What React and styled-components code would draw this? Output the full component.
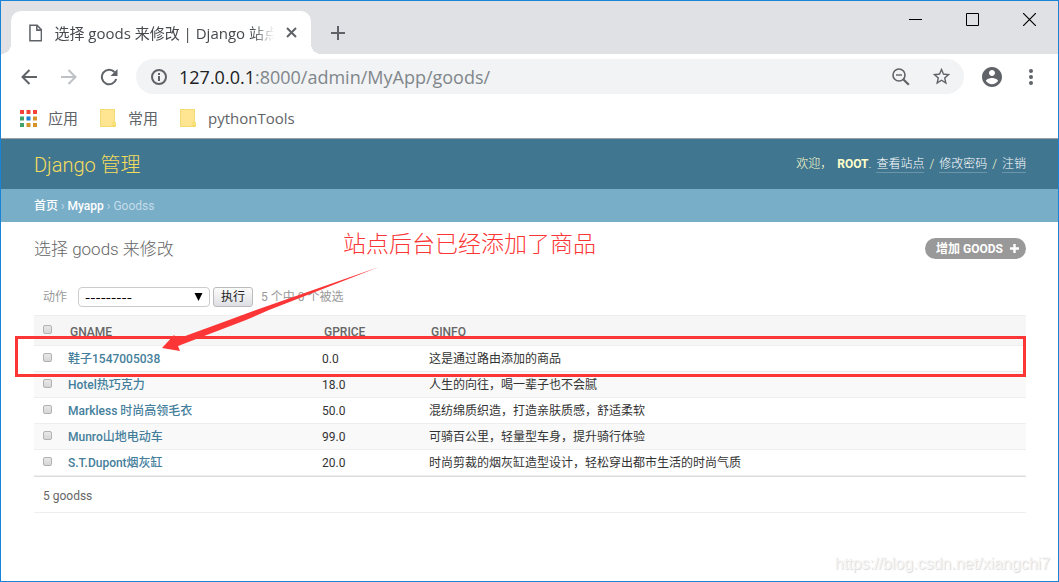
import React from "react";
import styled, { createGlobalStyle } from "styled-components";

const GlobalStyle = createGlobalStyle`
  * {
    box-sizing: border-box;
  }
  body {
    margin: 0;
    background: #fff;
  }
  button {
    font-family: inherit;
    cursor: pointer;
  }
`;

const BrowserWindow = styled.div`
  position: relative;
  min-height: 100vh;
  border: 1px solid #1883d7;
  background: #fff;
  font-family: "Open Sans", "Noto Sans CJK SC", sans-serif;
`;

const IconButton = styled.button`
  display: flex;
  align-items: center;
  justify-content: center;
  flex: none;
  width: ${(props) => props.$width || 24}px;
  height: ${(props) => props.$height || 24}px;
  padding: 0;
  border: 0;
  background: none;
  color: ${(props) => props.$color || "#5f6368"};
`;

const TabStrip = styled.div`
  display: flex;
  align-items: flex-end;
  height: 53px;
  padding-left: 10px;
  background: #dfe1e5;
`;

const Tab = styled.div`
  position: relative;
  display: flex;
  align-items: center;
  width: 300px;
  height: 43px;
  padding: 0 8px 0 18px;
  border-radius: 10px 10px 0 0;
  background: #fff;
  color: #45494d;

  &::before,
  &::after {
    content: "";
    position: absolute;
    bottom: 0;
    width: 10px;
    height: 10px;
  }
  &::before {
    right: 100%;
    background: radial-gradient(circle at 0 0, transparent 10px, #fff 10px);
  }
  &::after {
    left: 100%;
    background: radial-gradient(circle at 100% 0, transparent 10px, #fff 10px);
  }
`;

const TabTitle = styled.span`
  flex: 1;
  margin-left: 12px;
  white-space: nowrap;
  font-size: 15px;
  line-height: 24px;
  mask-image: linear-gradient(to right, #000 88%, transparent 98%);
`;

const NewTab = styled.div`
  align-self: center;
  margin: 10px auto 0 15px;
`;

const WindowControls = styled.div`
  display: flex;
  align-self: flex-start;
  height: 38px;
`;

const Toolbar = styled.div`
  display: flex;
  align-items: center;
  height: 45px;
  padding: 0 15px 0 16px;
`;

const NavButtons = styled.div`
  display: flex;
  gap: 16px;
  margin-right: 15px;
`;

const AddressBar = styled.div`
  display: flex;
  flex: 1;
  align-items: center;
  height: 35px;
  padding: 0 11px;
  border-radius: 18px;
  background: #f1f3f4;
`;

const Address = styled.div`
  flex: 1;
  margin-left: 8px;
  color: #80868b;
  font-size: 18px;
  line-height: 28px;

  b {
    color: #202124;
    font-weight: 400;
  }
`;

const AddressActions = styled.div`
  display: flex;
  gap: 16px;
`;

const MenuButtons = styled.div`
  display: flex;
  gap: 15px;
  margin-left: 16px;
`;

const BookmarksBar = styled.nav`
  display: flex;
  align-items: center;
  gap: 22px;
  height: 40px;
  padding: 0 18px 2px;
  border-bottom: 1px solid #9aa0a3;
`;

const Bookmark = styled.a`
  display: flex;
  align-items: center;
  gap: 11px;
  color: #5f6368;
  font-size: 15px;
  line-height: 24px;
  text-decoration: none;
`;

const Admin = styled.div`
  font-family: Roboto, "Noto Sans CJK SC", sans-serif;
  font-size: 12px;
  line-height: 16px;
  color: #333;
`;

const Header = styled.header`
  display: flex;
  align-items: center;
  justify-content: space-between;
  height: 50px;
  padding: 0 32px 0 33px;
  background: #417690;
  color: #ffc;
`;

const SiteName = styled.h1`
  margin: 0;
  padding-top: 1px;
  color: #f5dd5d;
  font-size: 20px;
  font-weight: 300;
  line-height: 24px;
`;

const UserTools = styled.div`
  display: flex;
  gap: 5px;
  font-weight: 300;

  strong {
    font-weight: 700;
  }
  a {
    border-bottom: 1px solid #6b95a9;
    color: #fff;
    text-decoration: none;
  }
`;

const Breadcrumbs = styled.nav`
  padding: 9px 33px 8px;
  background: #79aec8;
  color: #c4dce8;

  a {
    color: #fff;
    font-weight: 500;
    text-decoration: none;
  }
`;

const Content = styled.main`
  padding: 16px 32px 20px 33px;
`;

const TitleRow = styled.div`
  display: flex;
  align-items: flex-start;
  justify-content: space-between;
  height: 49px;
`;

const PageTitle = styled.h2`
  margin: 0;
  color: #666;
  font-size: 17px;
  font-weight: 300;
  line-height: 22px;
`;

const AddLink = styled.a`
  display: flex;
  align-items: center;
  gap: 7px;
  height: 21px;
  padding: 0 7px 0 11px;
  border-radius: 11px;
  background: #999;
  color: #fff;
  font-weight: 700;
  text-decoration: none;
`;

const Actions = styled.form`
  display: flex;
  align-items: center;
  gap: 3px;
  height: 28px;
  padding: 0 9px 8px;
  color: #999;
`;

const ActionLabel = styled.label`
  display: flex;
  align-items: center;
  gap: 11px;
`;

const SelectBox = styled.span`
  position: relative;
  display: flex;

  svg {
    position: absolute;
    top: 6px;
    right: 7px;
    pointer-events: none;
  }
`;

const ActionSelect = styled.select`
  appearance: none;
  width: 132px;
  height: 20px;
  padding: 0 6px;
  border: 1px solid #ccc;
  border-radius: 4px;
  background: #fff;
  color: #000;
  font-family: "Noto Sans CJK SC", sans-serif;
  font-size: 15px;
  line-height: 18px;
`;

const RunButton = styled.button`
  height: 20px;
  padding: 0 7px;
  border: 1px solid #bbb;
  border-radius: 3px;
  background: linear-gradient(#fcfcfc, #dedfe4);
  color: #222;
  font-size: 12px;
  line-height: 18px;
`;

const Counter = styled.span`
  margin-left: 5px;
`;

const ResultTable = styled.table`
  width: 100%;
  border-collapse: collapse;
  table-layout: fixed;

  th,
  td {
    height: 26px;
    padding: 0 8px;
    border-bottom: 1px solid #eee;
    text-align: left;
    white-space: nowrap;
  }
  thead th {
    height: 30px;
    padding: 3px 10px 0;
    border-top: 1px solid #eee;
    background: #f6f6f6;
    color: #666;
    font-weight: 500;
  }
  th:first-child,
  td:first-child {
    padding: 0 9px;
  }
  tbody tr:nth-child(even) {
    background: #f9f9f9;
  }
  tbody a {
    color: #447e9b;
    font-weight: 500;
    text-decoration: none;
  }
`;

const HeadCell = styled.th`
  width: ${(props) => (props.$width ? `${props.$width}px` : "auto")};
`;

const RowCheck = styled.input`
  display: block;
  appearance: none;
  width: 9px;
  height: 9px;
  margin: 0 0 2px;
  border: 1px solid #b2b2b2;
  border-radius: 2px;
  background: linear-gradient(#e8e8e8, #d6d6d6);
`;

const Paginator = styled.p`
  margin: 0;
  padding: 11px 9px 8px;
  border-top: 1px solid #ddd;
  border-bottom: 1px solid #eee;
  color: #666;
`;

const Highlight = styled.div`
  position: absolute;
  top: 335px;
  left: 14px;
  right: 32px;
  height: 41px;
  border: 3px solid #fc3636;
  pointer-events: none;
`;

const Note = styled.div`
  position: absolute;
  top: 225px;
  left: 342px;
  color: #fc3636;
  font-family: "Noto Sans CJK SC", sans-serif;
  font-size: 23px;
  font-weight: 300;
  line-height: 32px;
  pointer-events: none;
`;

const NoteArrow = styled.svg`
  position: absolute;
  top: 265px;
  left: 160px;
  pointer-events: none;
`;

const Watermark = styled.div`
  position: absolute;
  right: 8px;
  bottom: 7px;
  color: #f6f6f6;
  font-family: "Liberation Sans", sans-serif;
  font-size: 16px;
  line-height: 20px;
  text-shadow: 1px 1px 1px #d8d8d8;
`;

const goods = [
  { name: "鞋子1547005038", price: "0.0", info: "这是通过路由添加的商品" },
  { name: "Hotel热巧克力", price: "18.0", info: "人生的向往，喝一辈子也不会腻" },
  {
    name: "Markless 时尚高领毛衣",
    price: "50.0",
    info: "混纺绵质织造，打造亲肤质感，舒适柔软",
  },
  {
    name: "Munro山地电动车",
    price: "99.0",
    info: "可骑百公里，轻量型车身，提升骑行体验",
  },
  {
    name: "S.T.Dupont烟灰缸",
    price: "20.0",
    info: "时尚剪裁的烟灰缸造型设计，轻松穿出都市生活的时尚气质",
  },
];

const appColors = [
  "#f44336", "#f44336", "#f44336",
  "#3fa36b", "#1a7fd6", "#d6932a",
  "#3fa36b", "#d6932a", "#d6932a",
];

function PageIcon() {
  return (
    <svg width="14" height="18" viewBox="0 0 14 18" fill="none" stroke="#5f6368" strokeWidth="1.6">
      <path d="M1 1h7.5L13 5.5V17H1z" />
      <path d="M8.2 1v5H13" />
    </svg>
  );
}

function AppsIcon() {
  return (
    <svg width="18" height="18" viewBox="0 0 18 18">
      {appColors.map((color, i) => (
        <rect
          key={i}
          x={1 + (i % 3) * 6.5}
          y={1 + Math.floor(i / 3) * 6.5}
          width="4"
          height="4"
          fill={color}
        />
      ))}
    </svg>
  );
}

function FolderIcon() {
  return (
    <svg width="17" height="18" viewBox="0 0 17 18">
      <path d="M1 0h13a1 1 0 0 1 1 1v12l-3 5H1a1 1 0 0 1-1-1V1a1 1 0 0 1 1-1z" fill="#ffe591" />
      <path d="M12 17.5H.5V.5h14V12" fill="none" stroke="#f3da72" />
      <path d="M11 18v-1.500h1.500V14a1.700 1.700 0 0 1 3.400 0v3a1 1 0 0 1-1 1z" fill="#f6d965" />
      <path d="M13.500 16v-2a.8.8 0 0 1 1.500 0v2z" fill="#ffe591" />
    </svg>
  );
}

function TabBar() {
  return (
    <TabStrip>
      <Tab>
        <PageIcon />
        <TabTitle>选择 goods 来修改 | Django 站点</TabTitle>
        <IconButton aria-label="关闭标签页">
          <svg width="11" height="11" viewBox="0 0 11 11" stroke="currentColor" strokeWidth="2">
            <path d="M1 1l9 9M10 1l-9 9" />
          </svg>
        </IconButton>
      </Tab>
      <NewTab>
        <IconButton aria-label="打开新的标签页">
          <svg width="16" height="16" viewBox="0 0 16 16" stroke="currentColor" strokeWidth="2">
            <path d="M8 1v14M1 8h14" />
          </svg>
        </IconButton>
      </NewTab>
      <WindowControls>
        <IconButton aria-label="最小化" $width={57} $height={37} $color="#000">
          <svg width="13" height="13" viewBox="0 0 13 13" stroke="currentColor">
            <path d="M0 6.500h13" />
          </svg>
        </IconButton>
        <IconButton aria-label="最大化" $width={57} $height={37} $color="#000">
          <svg width="13" height="13" viewBox="0 0 13 13" fill="none" stroke="currentColor">
            <path d="M.5.5h12v12H.5z" />
          </svg>
        </IconButton>
        <IconButton aria-label="关闭" $width={57} $height={37} $color="#000">
          <svg width="13" height="13" viewBox="0 0 13 13" stroke="currentColor" strokeWidth="1.200">
            <path d="M0 0l13 13M13 0L0 13" />
          </svg>
        </IconButton>
      </WindowControls>
    </TabStrip>
  );
}

function NavigationBar() {
  return (
    <Toolbar>
      <NavButtons>
        <IconButton aria-label="后退">
          <svg width="16" height="16" viewBox="0 0 16 16" fill="none" stroke="currentColor" strokeWidth="2">
            <path d="M16 8H1.500M8.500 1L1.500 8l7 7" />
          </svg>
        </IconButton>
        <IconButton aria-label="前进" $color="#bdc1c6">
          <svg width="16" height="16" viewBox="0 0 16 16" fill="none" stroke="currentColor" strokeWidth="2">
            <path d="M0 8h14.500M7.500 1l7 7-7 7" />
          </svg>
        </IconButton>
        <IconButton aria-label="重新加载">
          <svg width="18" height="18" viewBox="0 0 18 18" fill="none" stroke="currentColor" strokeWidth="2">
            <path d="M14.500 4A7.300 7.300 0 1 0 16.200 11" />
            <path d="M17.500 1v7h-7z" fill="currentColor" stroke="none" />
          </svg>
        </IconButton>
      </NavButtons>
      <AddressBar>
        <IconButton aria-label="查看网站信息">
          <svg width="16" height="16" viewBox="0 0 16 16" fill="none" stroke="currentColor" strokeWidth="2">
            <circle cx="8" cy="8" r="7" />
            <path d="M8 7v5M8 4v2" />
          </svg>
        </IconButton>
        <Address>
          <b>127.0.0.1</b>:8000/admin/MyApp/goods/
        </Address>
        <AddressActions>
          <IconButton aria-label="缩放">
            <svg width="18" height="18" viewBox="0 0 18 18" fill="none" stroke="currentColor">
              <circle cx="7" cy="7" r="6" strokeWidth="1.600" />
              <path d="M4 7h6" strokeWidth="1.400" />
              <path d="M11.200 11.200l5.600 5.600" strokeWidth="2.200" />
            </svg>
          </IconButton>
          <IconButton aria-label="为此网页添加书签">
            <svg width="21" height="21" viewBox="0 0 24 24" fill="currentColor">
              <path d="M22 9.240l-7.190-.62L12 2 9.190 8.630 2 9.240l5.460 4.730L5.820 21 12 17.270 18.180 21l-1.630-7.030L22 9.240zM12 15.400l-3.760 2.270 1-4.280-3.320-2.880 4.380-.38L12 6.100l1.710 4.040 4.380.38-3.320 2.880 1 4.280L12 15.400z" />
            </svg>
          </IconButton>
        </AddressActions>
      </AddressBar>
      <MenuButtons>
        <IconButton aria-label="用户">
          <svg width="26" height="26" viewBox="0 0 24 24" fill="currentColor">
            <path d="M12 2C6.480 2 2 6.480 2 12s4.480 10 10 10 10-4.480 10-10S17.520 2 12 2zm0 3c1.660 0 3 1.340 3 3s-1.340 3-3 3-3-1.340-3-3 1.340-3 3-3zm0 14.200c-2.500 0-4.710-1.280-6-3.220.03-1.990 4-3.080 6-3.080 1.990 0 5.970 1.090 6 3.080-1.290 1.940-3.500 3.220-6 3.220z" />
          </svg>
        </IconButton>
        <IconButton aria-label="菜单">
          <svg width="4" height="16" viewBox="0 0 4 16" fill="currentColor">
            <circle cx="2" cy="2" r="2" />
            <circle cx="2" cy="8" r="2" />
            <circle cx="2" cy="14" r="2" />
          </svg>
        </IconButton>
      </MenuButtons>
    </Toolbar>
  );
}

function Bookmarks() {
  return (
    <BookmarksBar>
      <Bookmark href="#apps">
        <AppsIcon />
        应用
      </Bookmark>
      <Bookmark href="#common">
        <FolderIcon />
        常用
      </Bookmark>
      <Bookmark href="#python">
        <FolderIcon />
        pythonTools
      </Bookmark>
    </BookmarksBar>
  );
}

function ActionBar() {
  return (
    <Actions onSubmit={(e) => e.preventDefault()}>
      <ActionLabel>
        动作
        <SelectBox>
          <ActionSelect name="action">
            <option>---------</option>
          </ActionSelect>
          <svg width="9" height="8" viewBox="0 0 9 8">
            <path d="M.5 0h8L4.500 8z" fill="#000" />
          </svg>
        </SelectBox>
      </ActionLabel>
      <RunButton type="submit">执行</RunButton>
      <Counter>5 个中 0 个被选</Counter>
    </Actions>
  );
}

function GoodsTable() {
  return (
    <ResultTable>
      <thead>
        <tr>
          <HeadCell $width={26}>
            <RowCheck type="checkbox" aria-label="全选" />
          </HeadCell>
          <HeadCell $width={254}>GNAME</HeadCell>
          <HeadCell $width={107}>GPRICE</HeadCell>
          <HeadCell>GINFO</HeadCell>
        </tr>
      </thead>
      <tbody>
        {goods.map((item) => (
          <tr key={item.name}>
            <td>
              <RowCheck type="checkbox" aria-label={item.name} />
            </td>
            <td>
              <a href="#change">{item.name}</a>
            </td>
            <td>{item.price}</td>
            <td>{item.info}</td>
          </tr>
        ))}
      </tbody>
    </ResultTable>
  );
}

export default function App() {
  return (
    <BrowserWindow>
      <GlobalStyle />
      <TabBar />
      <NavigationBar />
      <Bookmarks />
      <Admin>
        <Header>
          <SiteName>Django 管理</SiteName>
          <UserTools>
            <span>欢迎，</span>
            <span>
              <strong>ROOT</strong>.
            </span>
            <a href="#site">查看站点</a>/<a href="#password">修改密码</a>/
            <a href="#logout">注销</a>
          </UserTools>
        </Header>
        <Breadcrumbs>
          <a href="#home">首页</a> › <a href="#myapp">Myapp</a> › Goodss
        </Breadcrumbs>
        <Content>
          <TitleRow>
            <PageTitle>选择 goods 来修改</PageTitle>
            <AddLink href="#add">
              增加 GOODS
              <svg width="9" height="9" viewBox="0 0 9 9" stroke="#fff" strokeWidth="2.400">
                <path d="M4.500 0v9M0 4.500h9" />
              </svg>
            </AddLink>
          </TitleRow>
          <ActionBar />
          <GoodsTable />
          <Paginator>5 goodss</Paginator>
        </Content>
      </Admin>
      <Highlight />
      <Note>站点后台已经添加了商品</Note>
      <NoteArrow width="220" height="86" viewBox="0 0 220 86">
        <path d="M1 82L13 69l3 4 52-19 27-10L218 1 108 44 85 54 17 80l2 5z" fill="#fc3636" />
      </NoteArrow>
      <Watermark>https://blog.csdn.net/xiangchi7</Watermark>
    </BrowserWindow>
  );
}
